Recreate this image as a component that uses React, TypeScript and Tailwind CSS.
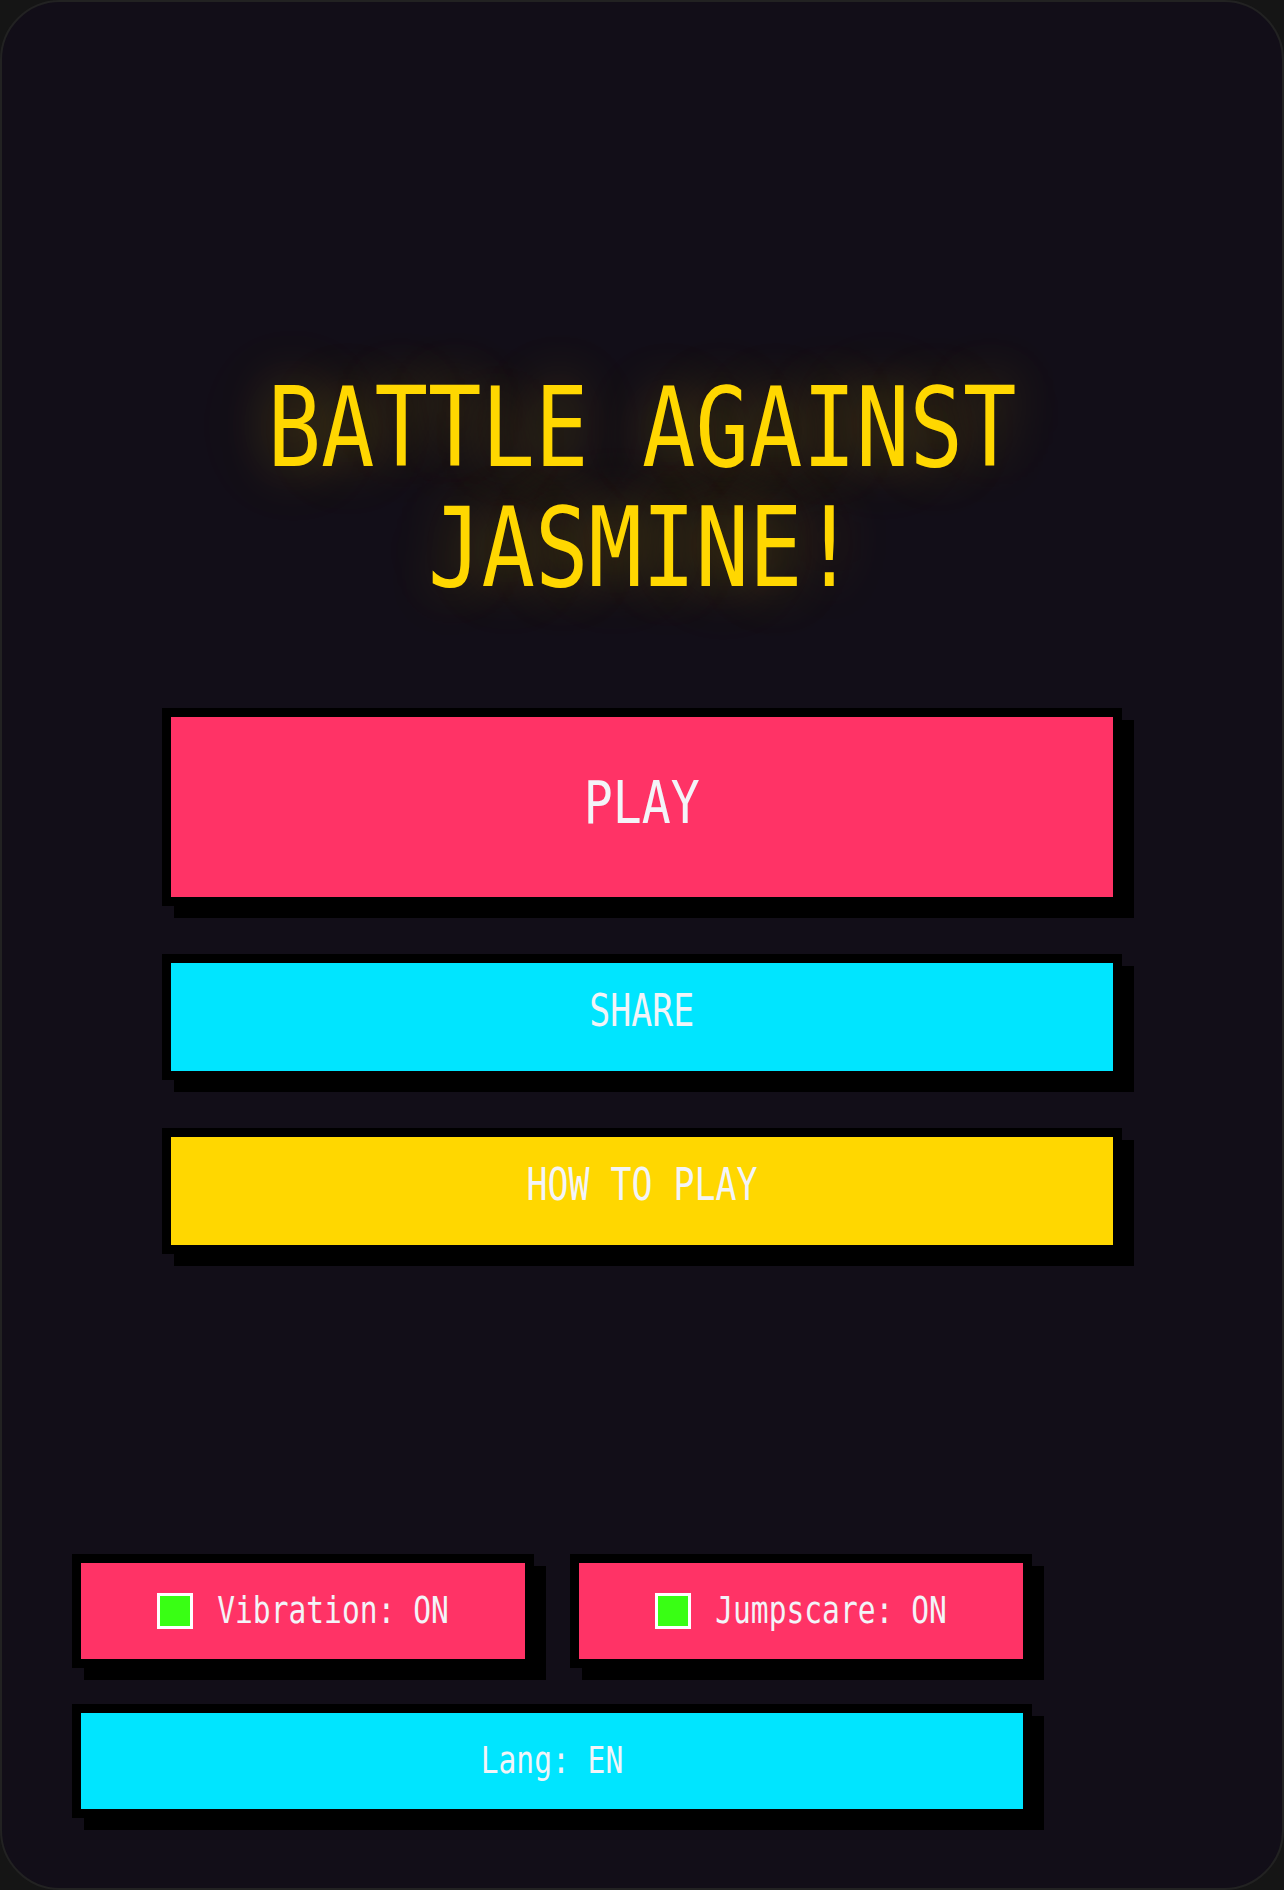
import React from 'react';

interface MenuButtonProps {
    label: string;
    color: string;
    big?: boolean;
}

const MenuButton: React.FC<MenuButtonProps> = ({ label, color, big = false }) => {
    return (
        <button
            className={`flex w-full items-center justify-center border-[9px] border-black shadow-[12px_12px_0_#000] ${color} ${
                big ? 'h-[198px] pb-2' : 'h-[126px] pb-3'
            }`}
        >
            <span
                className={`inline-block text-[#f3f4f8] ${big ? 'scale-x-[0.83] text-[58px]' : 'scale-x-[0.775] text-[45px]'}`}
            >
                {label}
            </span>
        </button>
    );
};

interface SettingButtonProps {
    label: string;
    color: string;
    checked?: boolean;
}

const SettingButton: React.FC<SettingButtonProps> = ({ label, color, checked }) => {
    return (
        <button
            className={`flex h-[114px] w-full items-center justify-center gap-[24px] border-[9px] border-black shadow-[12px_12px_0_#000] ${color}`}
        >
            {checked !== undefined && (
                <span
                    className={`block size-[36px] border-[3px] border-white ${checked ? 'bg-[#39ff14]' : 'bg-transparent'}`}
                />
            )}
            <span className="inline-block scale-y-[1.24] text-[29.6px] text-[#f3f4f8]">{label}</span>
        </button>
    );
};

export default function App() {
    return (
        <div className="min-h-screen bg-[#151515]">
            <div className="h-[1890px] overflow-hidden rounded-[60px] border-2 border-[#222222] bg-[#120e18] font-['DejaVu_Sans_Mono',monospace]">
                <div className="pt-[366px]">
                    <h1 className="scale-x-[0.808] text-center text-[110px] leading-[120px] font-normal text-[#ffd700] [text-shadow:0_0_60px_rgba(255,215,0,0.3),0_0_120px_rgba(255,215,0,0.14)]">
                        BATTLE AGAINST
                        <br />
                        JASMINE!
                    </h1>
                </div>

                <div className="mx-auto mt-[100px] flex w-[960px] flex-col gap-[48px]">
                    <MenuButton label="PLAY" color="bg-[#ff3366]" big />
                    <MenuButton label="SHARE" color="bg-[#00e5ff]" />
                    <MenuButton label="HOW TO PLAY" color="bg-[#ffd700]" />
                </div>

                <div className="ml-[70px] mt-[300px] flex w-[960px] flex-col gap-[36px]">
                    <div className="grid grid-cols-2 gap-[36px]">
                        <SettingButton label="Vibration: ON" color="bg-[#ff3366]" checked />
                        <SettingButton label="Jumpscare: ON" color="bg-[#ff3366]" checked />
                    </div>
                    <SettingButton label="Lang: EN" color="bg-[#00e5ff]" />
                </div>
            </div>
        </div>
    );
}
